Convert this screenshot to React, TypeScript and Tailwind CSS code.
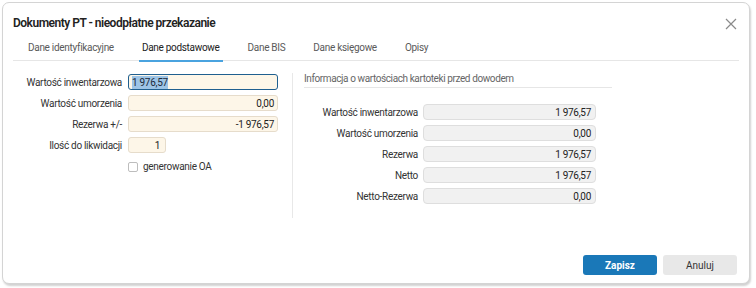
import React from "react";

const leftRows = [
  { label: "Wartość inwentarzowa", value: "1 976,57", focused: true },
  { label: "Wartość umorzenia", value: "0,00" },
  { label: "Rezerwa +/-", value: "-1 976,57" },
];

const rightRows = [
  { label: "Wartość inwentarzowa", value: "1 976,57" },
  { label: "Wartość umorzenia", value: "0,00" },
  { label: "Rezerwa", value: "1 976,57" },
  { label: "Netto", value: "1 976,57" },
  { label: "Netto-Rezerwa", value: "0,00" },
];

const tabs = ["Dane identyfikacyjne", "Dane podstawowe", "Dane BIS", "Dane księgowe", "Opisy"];

export default function App() {
  return (
    <div className="w-[756px] h-[288px] bg-white p-[2px] font-['Roboto',sans-serif]">
      <div className="relative flex flex-col w-[748px] h-[282px] bg-white border border-[#d4d4d4] rounded-[7px] shadow-[1px_2px_2px_rgba(0,0,0,0.18)]">
        {/* Title */}
        <div className="flex items-center justify-between pl-[10px] pr-[12px] pt-[10px] h-[30px]">
          <div className="text-[12px] font-semibold text-[#222] leading-none tracking-[-0.5px]">
            Dokumenty PT - nieodpłatne przekazanie
          </div>
          <svg width="12" height="12" viewBox="0 0 12 12" className="mt-[1px]">
            <path d="M1 1 L11 11 M11 1 L1 11" stroke="#8a8a8a" strokeWidth="1.2" />
          </svg>
        </div>
        {/* Tabs */}
        <div className="mx-[10px] mt-[8px] flex border-b border-[#e6e6e6] pl-[15px] gap-[28px] h-[20px] items-start">
          {tabs.map((t, i) => (
            <div
              key={t}
              className={`relative text-[10px] tracking-[-0.3px] leading-[14px] h-[20px] ${i === 1 ? "text-[#222]" : "text-[#5a5a5a]"}`}
            >
              {t}
              {i === 1 && (
                <div className="absolute left-[-3px] right-[-3px] bottom-[-1px] h-[2px] bg-[#4aa3df]" />
              )}
            </div>
          ))}
        </div>
        {/* Body */}
        <div className="flex flex-1 pl-[10px]">
          {/* Left panel */}
          <div className="w-[279px] pt-[13px] flex flex-col gap-[5px] text-[10px] tracking-[-0.3px] text-[#333]">
            {leftRows.map((r) => (
              <div key={r.label} className="flex items-center">
                <div className="w-[115px] text-right pr-[6px] whitespace-nowrap">{r.label}</div>
                <div
                  className={`w-[150px] h-[16px] rounded-[3px] flex items-center px-[3px] ${
                    r.focused
                      ? "border border-[#1f5f8f] bg-[#fdf6e8] justify-start"
                      : "border border-[#e6dccb] bg-[#fdf6e8] justify-end"
                  }`}
                >
                  {r.focused ? (
                    <span className="bg-[#9dc4e6] text-[#1c2a3a] leading-[13px]">{r.value}</span>
                  ) : (
                    <span className="text-[#222]">{r.value}</span>
                  )}
                </div>
              </div>
            ))}
            <div className="flex items-center">
              <div className="w-[115px] text-right pr-[6px] whitespace-nowrap">Ilość do likwidacji</div>
              <div className="w-[38px] h-[16px] rounded-[3px] border border-[#e6dccb] bg-[#fdf6e8] flex items-center justify-end px-[5px] text-[#222]">
                1
              </div>
            </div>
            <div className="flex items-center mt-[1px] pl-[115px]">
              <div className="w-[10px] h-[10px] border border-[#bdbdbd] rounded-[2px] bg-white" />
              <div className="ml-[5px] text-[#333]">generowanie OA</div>
            </div>
          </div>
          {/* Divider */}
          <div className="w-px bg-[#e8e8e8] mt-[12px] h-[145px]" />
          {/* Right panel */}
          <div className="pl-[11px] pt-[11px] text-[10px] tracking-[-0.3px] text-[#333]">
            <div className="w-[308px] border-b border-[#e6e6e6] text-[#666] h-[14px] leading-[14px] box-content pb-[1px] tracking-[-0.4px]">
              Informacja o wartościach kartoteki przed dowodem
            </div>
            <div className="mt-[16px] flex flex-col gap-[5px]">
              {rightRows.map((r) => (
                <div key={r.label} className="flex items-center">
                  <div className="w-[119px] text-right pr-[5px] whitespace-nowrap">{r.label}</div>
                  <div className="w-[173px] h-[16px] rounded-[4px] border border-[#dedede] bg-[#f1f1f1] flex items-center justify-end px-[4px] text-[#222]">
                    {r.value}
                  </div>
                </div>
              ))}
            </div>
          </div>
        </div>
        {/* Footer */}
        <div className="flex justify-end gap-[6px] pr-[12px] pb-[8px]">
          <button className="w-[74px] h-[20px] rounded-[3px] bg-[#1a78b8] text-white text-[10px] font-bold">
            Zapisz
          </button>
          <button className="w-[74px] h-[20px] rounded-[3px] bg-[#e8e8e8] text-[#333] text-[10px]">
            Anuluj
          </button>
        </div>
      </div>
    </div>
  );
}
